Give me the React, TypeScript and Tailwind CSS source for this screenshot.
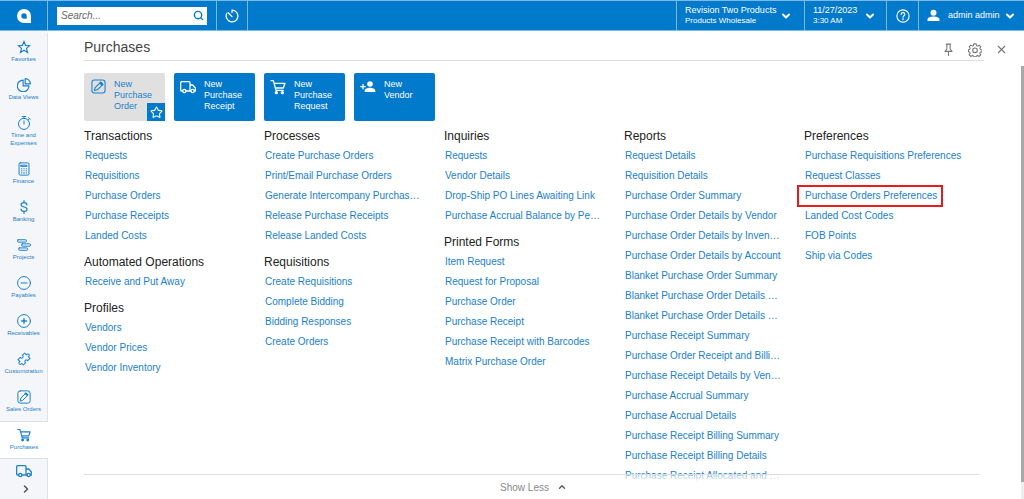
import React, { useState } from 'react';
import { ChevronDown, ChevronRight, ChevronUp, Search, Star, X } from 'lucide-react';

type IconProps = { className?: string };

const stroke = {
  viewBox: '0 0 24 24',
  fill: 'none',
  stroke: 'currentColor',
  strokeWidth: 1.7,
  strokeLinecap: 'round' as const,
  strokeLinejoin: 'round' as const,
  'aria-hidden': true,
};

const StarIcon: React.FC<IconProps> = ({ className }) => (
  <svg {...stroke} strokeLinejoin="miter" strokeWidth={2} className={className}>
    <path d="M12 2.5l2.7 6.7 7.1.5-5.5 4.6 1.8 7L12 17.4l-6.1 3.9 1.8-7-5.5-4.6 7.1-.5z" />
  </svg>
);

const PieIcon: React.FC<IconProps> = ({ className }) => (
  <svg {...stroke} strokeWidth={2} className={className}>
    <path d="M10.5 3.5a10 10 0 1 0 10 10h-10z" />
    <path d="M14 1v9h9a9 9 0 0 0-9-9z" />
  </svg>
);

const StopwatchIcon: React.FC<IconProps> = ({ className }) => (
  <svg {...stroke} className={className}>
    <circle cx="12" cy="13.5" r="9.5" />
    <path d="M12 8.5v5.5M9 1h6M12 1v3M19 6.5L21.3 4.2M20 3l2.7 2.7" />
  </svg>
);

const CalculatorIcon: React.FC<IconProps> = ({ className }) => (
  <svg {...stroke} className={className}>
    <rect x="3.5" y="1.5" width="17" height="21" rx="2" />
    <path d="M7 5.5h10v2H7z" />
    <path d="M7 11.5h2M11 11.5h2M15 11.5h2M7 15h2M11 15h2M15 15h2M7 18.5h2M11 18.5h2M15 18.5h2" strokeLinecap="butt" strokeWidth={2} />
  </svg>
);

const DollarIcon: React.FC<IconProps> = ({ className }) => (
  <svg {...stroke} strokeWidth={2} className={className}>
    <path d="M12 1v3.5M12 19.5V23M17 8.5c0-2.4-2-4-5-4s-5 1.4-5 3.7c0 5.2 10.2 2.4 10.2 7.6 0 2.3-2.2 3.7-5.2 3.7s-5.2-1.5-5.2-4" />
  </svg>
);

const GanttIcon: React.FC<IconProps> = ({ className }) => (
  <svg {...stroke} className={className}>
    <rect x="1" y="3" width="15" height="4" rx="1" />
    <rect x="8" y="10" width="15" height="4" rx="1" />
    <rect x="3" y="17" width="15" height="4" rx="1" />
  </svg>
);

const MinusIcon: React.FC<IconProps> = ({ className }) => (
  <svg {...stroke} className={className}>
    <circle cx="12" cy="12" r="11" />
    <path d="M7 12h10" strokeWidth={2} />
  </svg>
);

const PlusIcon: React.FC<IconProps> = ({ className }) => (
  <svg {...stroke} className={className}>
    <circle cx="12" cy="12" r="11" />
    <path d="M8 12h8M12 8v8" strokeWidth={2.4} />
  </svg>
);

const PuzzleIcon: React.FC<IconProps> = ({ className }) => (
  <svg {...stroke} className={className}>
    <path
      transform="rotate(-45 12 12)"
      d="M4 5.500h5.500a2.600 2.600 0 1 0 5 0H20V10a2.500 2.500 0 1 1 0 4.500v4h-5.500a2.600 2.600 0 1 0-5 0H4v-4A2.500 2.500 0 1 1 4 10z"
    />
  </svg>
);

const PencilBoxIcon: React.FC<IconProps> = ({ className }) => (
  <svg {...stroke} className={className}>
    <rect x="1.5" y="1.5" width="21" height="21" rx="4" />
    <path d="M5.5 18.5l1.2-4.7L15.5 5l3.5 3.5-8.8 8.8z" />
    <path d="M14 6.5l3.5 3.5L19 8.5 15.5 5z" fill="currentColor" />
  </svg>
);

const CartIcon: React.FC<IconProps> = ({ className }) => (
  <svg {...stroke} strokeWidth={2} className={className}>
    <path d="M1.5 2.5H5L9 17h11M6 6.5h16.5l-2.5 7H8" />
    <circle cx="9.5" cy="20.5" r="1.5" fill="currentColor" />
    <circle cx="18.5" cy="20.5" r="1.5" fill="currentColor" />
  </svg>
);

const TruckIcon: React.FC<IconProps> = ({ className }) => (
  <svg {...stroke} strokeWidth={1.9} className={className}>
    <path d="M4 18H2.5A1.5 1.5 0 0 1 1 16.500v-11A1.5 1.5 0 0 1 2.500 4h11A1.5 1.5 0 0 1 15 5.500V18H9M15 9h4l4 4.500V18h-1.500M15 18h1.500" />
    <circle cx="6.5" cy="18" r="2.4" />
    <circle cx="19" cy="18" r="2.4" />
  </svg>
);

const AddPersonIcon: React.FC<IconProps> = ({ className }) => (
  <svg viewBox="0 0 24 24" fill="currentColor" aria-hidden className={className}>
    <circle cx="15" cy="7.5" r="4.2" />
    <path d="M7 19.5v-2c0-3 5-4.3 8-4.3s8 1.3 8 4.3v2zM3.5 7.5h2v3h3v2h-3v3h-2v-3h-3v-2h3z" />
  </svg>
);

const PersonIcon: React.FC<IconProps> = ({ className }) => (
  <svg viewBox="0 0 24 24" fill="currentColor" aria-hidden className={className}>
    <circle cx="12" cy="7" r="5.5" />
    <path d="M1 22v-2.5c0-4 7-5.5 11-5.5s11 1.500 11 5.500V22z" />
  </svg>
);

const HistoryIcon: React.FC<IconProps> = ({ className }) => (
  <svg {...stroke} strokeWidth={2.2} className={className}>
    <path d="M12 2a10 10 0 1 1-9 5.700M12 2v4M12 13L5.500 6.500" />
  </svg>
);

const HelpIcon: React.FC<IconProps> = ({ className }) => (
  <svg {...stroke} strokeWidth={1.9} className={className}>
    <circle cx="12" cy="12" r="10.5" />
    <path d="M8.8 9.3c0-1.9 1.4-3.1 3.2-3.1s3.2 1.2 3.2 2.9c0 2.4-3.2 2.6-3.2 5" />
    <circle cx="12" cy="17.3" r=".6" fill="currentColor" />
  </svg>
);

const PinIcon: React.FC<IconProps> = ({ className }) => (
  <svg {...stroke} strokeWidth={2} className={className}>
    <path d="M8 2h8M9 2v9l-3.5 4.500h13L15 11V2M12 15.500V23" />
  </svg>
);

const GearIcon: React.FC<IconProps> = ({ className }) => (
  <svg {...stroke} strokeWidth={1.8} className={className}>
    <path d="M10 1.500h4l.6 3 2 .9 2.600-1.700 2.800 2.800-1.700 2.600.8 1.900 3 .6v3.600l-3 .6-.8 2 1.700 2.500-2.800 2.800-2.600-1.700-2 .9-.6 1.200h-4l-.6-1.200-2-.9-2.600 1.700L2 20.300l1.700-2.500-.8-2-2-.6v-3.600l2-.6.8-1.900L2 6.500l2.800-2.800 2.600 1.700 2-.9z" />
    <circle cx="12" cy="12.500" r="4" />
  </svg>
);

const Logo: React.FC<IconProps> = ({ className }) => (
  <svg viewBox="0 0 26 26" aria-hidden className={className}>
    <path d="M13 0a13 13 0 0 1 13 13v13H13a13 13 0 0 1 0-26z" fill="#fff" />
    <path d="M13 8a5 5 0 0 1 5 5v5h-5a5 5 0 0 1 0-10z" fill="#027acc" />
  </svg>
);

const MODULES = [
  { label: 'Favorites', Icon: StarIcon },
  { label: 'Data Views', Icon: PieIcon },
  { label: 'Time and Expenses', Icon: StopwatchIcon },
  { label: 'Finance', Icon: CalculatorIcon },
  { label: 'Banking', Icon: DollarIcon },
  { label: 'Projects', Icon: GanttIcon },
  { label: 'Payables', Icon: MinusIcon },
  { label: 'Receivables', Icon: PlusIcon },
  { label: 'Customization', Icon: PuzzleIcon },
  { label: 'Sales Orders', Icon: PencilBoxIcon },
  { label: 'Purchases', Icon: CartIcon },
];

const TILES = [
  { label: 'New Purchase Receipt', Icon: TruckIcon },
  { label: 'New Purchase Request', Icon: CartIcon },
  { label: 'New Vendor', Icon: AddPersonIcon },
];

const COLUMNS = [
  [
    { title: 'Transactions', links: ['Requests', 'Requisitions', 'Purchase Orders', 'Purchase Receipts', 'Landed Costs'] },
    { title: 'Automated Operations', links: ['Receive and Put Away'] },
    { title: 'Profiles', links: ['Vendors', 'Vendor Prices', 'Vendor Inventory'] },
  ],
  [
    {
      title: 'Processes',
      links: ['Create Purchase Orders', 'Print/Email Purchase Orders', 'Generate Intercompany Purchas…', 'Release Purchase Receipts', 'Release Landed Costs'],
    },
    { title: 'Requisitions', links: ['Create Requisitions', 'Complete Bidding', 'Bidding Responses', 'Create Orders'] },
  ],
  [
    { title: 'Inquiries', links: ['Requests', 'Vendor Details', 'Drop-Ship PO Lines Awaiting Link', 'Purchase Accrual Balance by Pe…'] },
    {
      title: 'Printed Forms',
      links: ['Item Request', 'Request for Proposal', 'Purchase Order', 'Purchase Receipt', 'Purchase Receipt with Barcodes', 'Matrix Purchase Order'],
    },
  ],
  [
    {
      title: 'Reports',
      links: [
        'Request Details',
        'Requisition Details',
        'Purchase Order Summary',
        'Purchase Order Details by Vendor',
        'Purchase Order Details by Inven…',
        'Purchase Order Details by Account',
        'Blanket Purchase Order Summary',
        'Blanket Purchase Order Details …',
        'Blanket Purchase Order Details …',
        'Purchase Receipt Summary',
        'Purchase Order Receipt and Billi…',
        'Purchase Receipt Details by Ven…',
        'Purchase Accrual Summary',
        'Purchase Accrual Details',
        'Purchase Receipt Billing Summary',
        'Purchase Receipt Billing Details',
        'Purchase Receipt Allocated and …',
      ],
    },
  ],
  [
    {
      title: 'Preferences',
      links: ['Purchase Requisitions Preferences', 'Request Classes', 'Purchase Orders Preferences', 'Landed Cost Codes', 'FOB Points', 'Ship via Codes'],
    },
  ],
];

const HIGHLIGHTED = 'Purchase Orders Preferences';

const TopBar: React.FC = () => {
  const [query, setQuery] = useState('');

  return (
    <header className="flex h-[31px] shrink-0 border-y border-[#7cb9e6] bg-[#027acc] text-white">
      <a href="#home" aria-label="Home" className="flex w-12 items-center justify-center border-r border-[#7cb9e6]">
        <Logo className="size-[14px]" />
      </a>
      <form className="flex items-center px-[9px]" onSubmit={(e) => e.preventDefault()}>
        <div className="flex h-[18px] w-[150px] items-center bg-white pr-[3px] pl-1">
          <input
            type="text"
            aria-label="Search"
            value={query}
            onChange={(e) => setQuery(e.target.value)}
            placeholder="Search..."
            className="min-w-0 flex-1 text-[10px] text-[#333] outline-none placeholder:text-[#666] placeholder:italic"
          />
          <button type="submit" aria-label="Run search" className="text-[#027acc]">
            <Search size={11} strokeWidth={3} />
          </button>
        </div>
      </form>
      <button aria-label="Recently visited" className="flex w-8 items-center justify-center border-x border-[#7cb9e6]">
        <HistoryIcon className="size-[14px]" />
      </button>

      <div className="ml-auto flex">
        <button className="flex w-32 items-center justify-between border-l border-[#7cb9e6] pr-3 pl-2 text-left">
          <span>
            <span className="block text-[9px] leading-[11px]">Revision Two Products</span>
            <span className="block text-[8px] leading-[10px]">Products Wholesale</span>
          </span>
          <ChevronDown size={12} strokeWidth={4} />
        </button>
        <button className="flex w-[82px] items-center justify-between border-l border-[#7cb9e6] pr-[10px] pl-2 text-left">
          <span>
            <span className="block text-[9px] leading-[11px]">11/27/2023</span>
            <span className="block text-[8px] leading-[10px]">3:30 AM</span>
          </span>
          <ChevronDown size={12} strokeWidth={4} />
        </button>
        <button aria-label="Help" className="flex w-8 items-center justify-center border-l border-[#7cb9e6]">
          <HelpIcon className="size-[14px]" />
        </button>
        <button className="flex w-[106px] items-center border-l border-[#7cb9e6] px-2">
          <PersonIcon className="size-[13px]" />
          <span className="ml-2 flex-1 text-left text-[9px]">admin admin</span>
          <ChevronDown size={12} strokeWidth={4} />
        </button>
      </div>
    </header>
  );
};

const Sidebar: React.FC = () => (
  <nav className="flex w-12 shrink-0 flex-col overflow-hidden bg-[#f4f6f9] pt-0.5 text-[#1a80cc]">
    {MODULES.map(({ label, Icon }) => {
      const active = label === 'Purchases';
      return (
        <a
          key={label}
          href={`#${label.toLowerCase().replace(/ /g, '-')}`}
          aria-current={active ? 'page' : undefined}
          className={`flex shrink-0 flex-col items-center ${active ? 'border-y border-[#dfe3e8] bg-white pt-1.5 pb-[7px]' : 'border-r border-[#dfe3e8] pt-[7px] pb-2'}`}
        >
          <Icon className="size-[14px]" />
          <span className="mt-px w-10 text-center text-[6px] leading-[8px]">{label}</span>
        </a>
      );
    })}
    <div className="flex flex-1 flex-col items-center gap-1 border-r border-[#dfe3e8] pt-1">
      <a href="#shipments" aria-label="Shipments">
        <TruckIcon className="size-4" />
      </a>
      <button aria-label="More" className="ml-1 text-[#555]">
        <ChevronRight size={12} strokeWidth={3} />
      </button>
    </div>
  </nav>
);

const App: React.FC = () => {
  const [expanded, setExpanded] = useState(true);

  return (
    <div className="flex h-screen flex-col overflow-hidden bg-white font-['Liberation_Sans',Arial,sans-serif]">
      <TopBar />
      <div className="flex min-h-0 flex-1">
        <Sidebar />
        <main className="relative min-w-0 flex-1 overflow-hidden pl-9">
          {/* Title row */}
          <div className="flex items-center pr-4">
            <h1 className="flex-1 pt-1 text-[14px] leading-[25px] text-[#444]">Purchases</h1>
            <div className="flex items-center gap-[13px] pt-2 text-[#777]">
              <button aria-label="Pin"><PinIcon className="size-[13px]" /></button>
              <button aria-label="Settings"><GearIcon className="size-[14px]" /></button>
              <button aria-label="Close"><X size={13} strokeWidth={2} /></button>
            </div>
          </div>

          <div className="mr-10 border-t border-[#ddd] pt-3">
            {/* Quick actions */}
            <div className="flex gap-[9px] text-[9px] leading-[11px]">
              <div className="relative h-12 w-[81px] rounded-xs bg-[#e0e0e0] text-[#1a80cc]">
                <a href="#new-order" className="flex gap-2 pt-1.5 pl-[7px]">
                  <PencilBoxIcon className="size-[15px] shrink-0" />
                  <span className="w-10">New Purchase Order</span>
                </a>
                <button aria-label="Add to favorites" className="absolute right-0 bottom-0 flex size-[18px] items-center justify-center bg-[#027acc] text-white">
                  <Star size={13} strokeWidth={2} />
                </button>
              </div>
              {TILES.map(({ label, Icon }) => (
                <a key={label} href="#new" className="flex h-12 w-[81px] gap-2 rounded-xs bg-[#027acc] pt-1.5 pl-1.5 text-white">
                  <Icon className="size-4 shrink-0" />
                  <span className="w-10">{label}</span>
                </a>
              ))}
            </div>

            {/* Link columns */}
            {expanded && (
              <div className="mt-[5px] grid grid-cols-5">
                {COLUMNS.map((groups, i) => (
                  <div key={i} className="flex min-w-0 flex-col gap-1.5">
                    {groups.map((group) => (
                      <section key={group.title}>
                        <h2 className="text-[12px] leading-5 text-[#222]">{group.title}</h2>
                        <ul className="pl-px text-[10px] leading-5 whitespace-nowrap text-[#1a80cc]">
                          {group.links.map((link, j) => (
                            <li key={j} className="h-5">
                              {link === HIGHLIGHTED ? (
                                <a href="#link" className="-my-px -ml-2 inline-block border-2 border-[#e81c1c] pr-1 pl-1.5 leading-[18px]">
                                  {link}
                                </a>
                              ) : (
                                <a href="#link" className="hover:underline">{link}</a>
                              )}
                            </li>
                          ))}
                        </ul>
                      </section>
                    ))}
                  </div>
                ))}
              </div>
            )}
          </div>

          <div className="absolute right-[45px] bottom-0 left-9 flex h-[25px] items-center justify-center border-t border-[#ddd] bg-linear-to-b from-white/50 to-white to-30% pl-1">
            <button onClick={() => setExpanded(!expanded)} className="flex items-center gap-2 text-[10px] text-[#888]">
              Show Less
              <ChevronUp size={10} strokeWidth={3} className="text-[#555]" />
            </button>
          </div>

          {/* Scrollbar */}
          <div className="absolute top-[35px] right-0 bottom-0 w-[3px] bg-[#eee]">
            <div className="h-[96%] bg-[#a8a8a8]" />
          </div>
        </main>
      </div>
    </div>
  );
};

export default App;
